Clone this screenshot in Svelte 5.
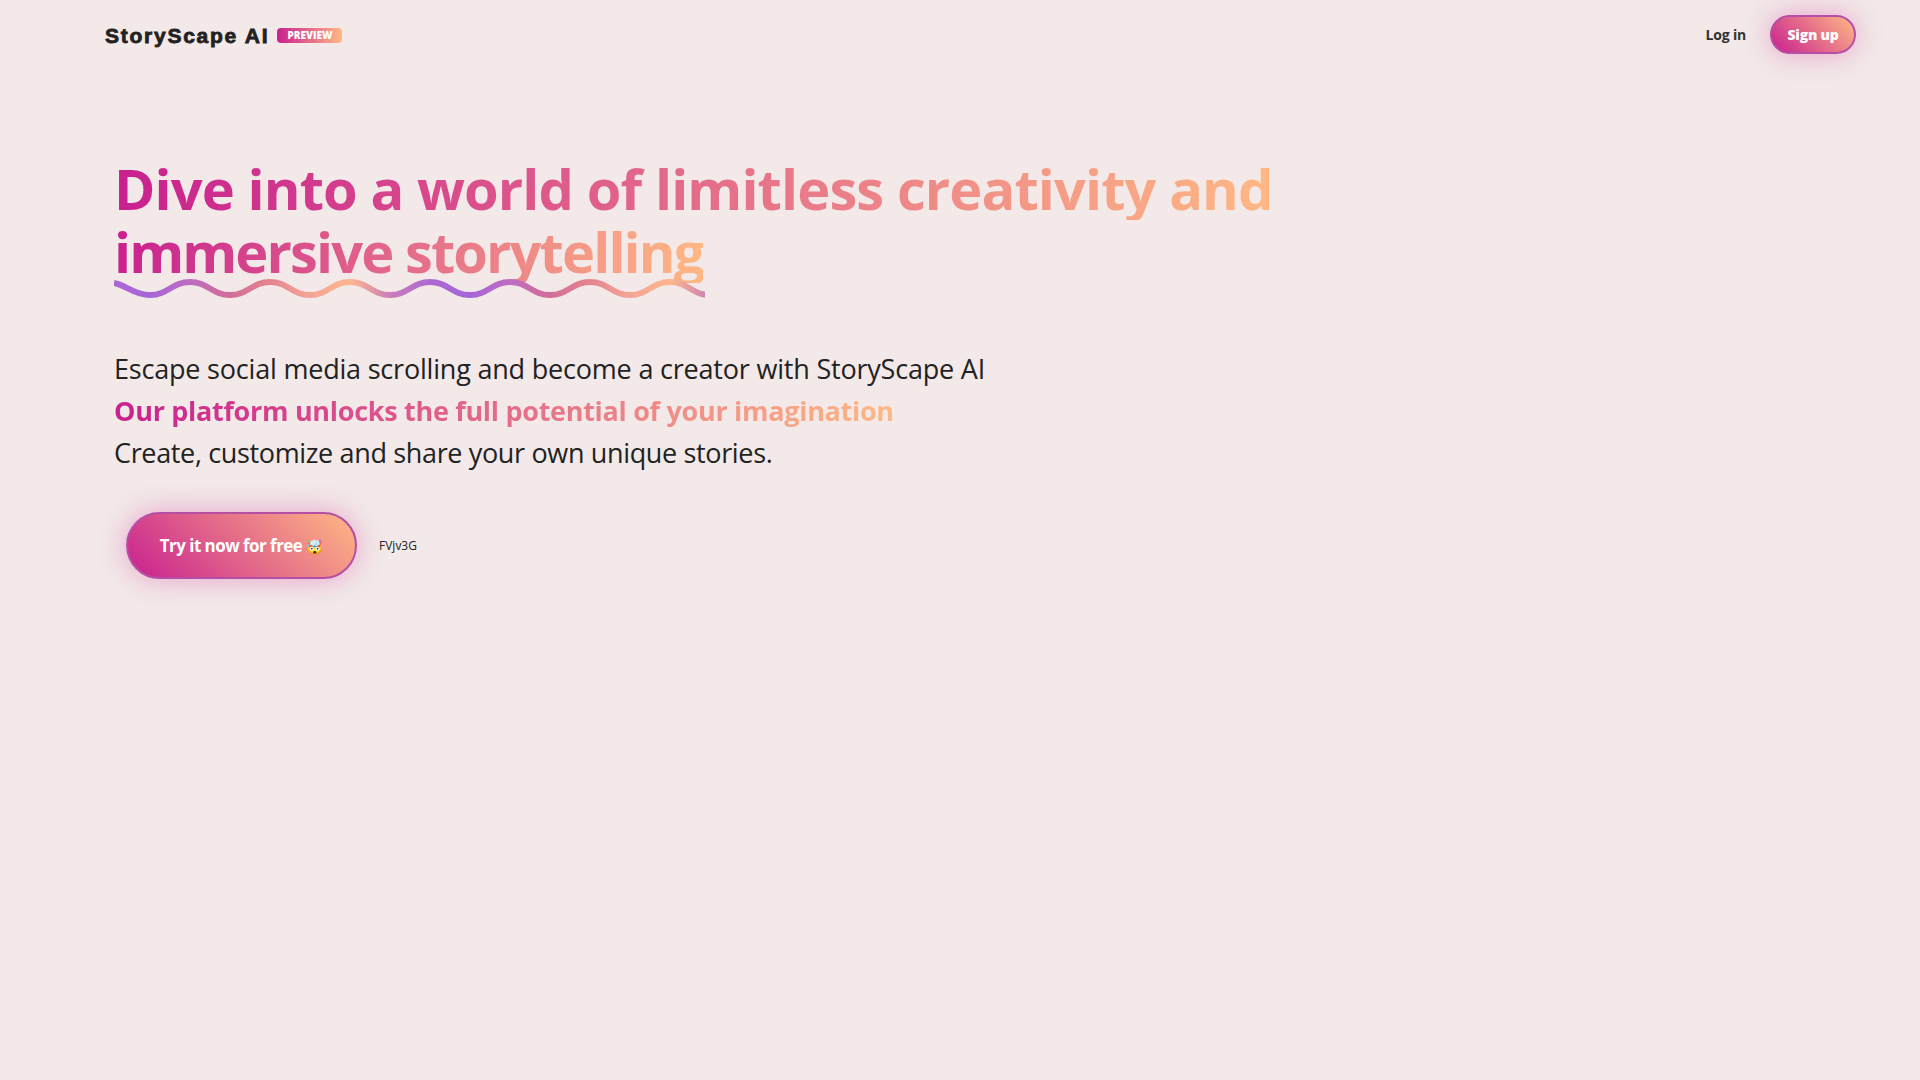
<script>
  const wave = (() => {
    const period = 80
    const top = 5
    const bottom = 18
    let d = `M0 6 C12 8 20 ${bottom} 36 ${bottom}`
    for (let x = 36; x < 590; x += period) {
      d += ` C${x + 18} ${bottom} ${x + 22} ${top} ${x + 40} ${top}`
      d += ` C${x + 58} ${top} ${x + 62} ${bottom} ${x + 80} ${bottom}`
    }
    return d
  })()
</script>

<div class="page">
  <nav class="navbar">
    <div class="brand">
      <span class="brand-name">StoryScape AI</span>
      <span class="preview">PREVIEW</span>
    </div>
    <div class="nav-links">
      <button class="login">Log in</button>
      <button class="btn signup">Sign up</button>
    </div>
  </nav>

  <section class="hero">
    <h1>
      <span class="grad">Dive into a world of limitless creativity and</span>
      <span class="grad second">immersive storytelling</span>
      <svg class="wave" width="591" height="24" viewBox="0 0 591 24" aria-hidden="true">
        <defs>
          <linearGradient id="wave-grad" gradientUnits="userSpaceOnUse" x1="0" y1="0" x2="320" y2="0" spreadMethod="repeat">
            <stop offset="0" stop-color="#a968d4" />
            <stop offset="0.11" stop-color="#a765d8" />
            <stop offset="0.24" stop-color="#be6cc0" />
            <stop offset="0.36" stop-color="#d46e98" />
            <stop offset="0.49" stop-color="#e58490" />
            <stop offset="0.61" stop-color="#f4a596" />
            <stop offset="0.74" stop-color="#fdb68e" />
            <stop offset="0.87" stop-color="#c87cbe" />
            <stop offset="1" stop-color="#a968d4" />
          </linearGradient>
        </defs>
        <path d={wave} fill="none" stroke="url(#wave-grad)" stroke-width="6" />
      </svg>
    </h1>

    <div class="copy">
      <p>Escape social media scrolling and become a creator with StoryScape AI</p>
      <p class="grad strong">Our platform unlocks the full potential of your imagination</p>
      <p class="last">Create, customize and share your own unique stories.</p>
    </div>

    <div class="cta-row">
      <button class="btn cta">Try it now for free <span class="emoji">🤯</span></button>
      <span class="code">FVjv3G</span>
    </div>
  </section>
</div>

<style>
  :global(body) {
    margin: 0;
    background: #f2e9e8;
    font-family: "Open Sans", "Noto Sans", sans-serif;
    color: #222;
  }
  .page {
    min-height: 1080px;
    box-sizing: border-box;
  }
  .navbar {
    display: flex;
    justify-content: space-between;
    align-items: center;
    padding: 15px 64px 0 105px;
  }
  .brand {
    display: flex;
    align-items: center;
    gap: 8px;
    padding-top: 2px;
  }
  .brand-name {
    font-family: "Liberation Sans", sans-serif;
    font-weight: 700;
    font-size: 21px;
    letter-spacing: 1.75px;
    -webkit-text-stroke: 0.8px #222;
    color: #222;
  }
  .preview {
    width: 65px;
    height: 15px;
    line-height: 15px;
    text-align: center;
    border-radius: 4px;
    background: linear-gradient(90deg, #c9208f, #ffb884);
    color: #fff;
    font-size: 10px;
    font-weight: 800;
  }
  .nav-links {
    display: flex;
    align-items: center;
    gap: 24px;
  }
  button {
    font-family: inherit;
    border: none;
    background: none;
    cursor: pointer;
  }
  .login {
    font-size: 14px;
    font-weight: 700;
    letter-spacing: -0.2px;
    color: #333;
    padding: 0;
  }
  .btn {
    color: #fff;
    font-weight: 700;
    border: 2px solid #b44fa5;
    border-radius: 999px;
    background: linear-gradient(45deg, #c9208f, #ffb884);
    box-shadow: 0 0 28px rgba(220, 50, 160, 0.4);
  }
  .signup {
    width: 86px;
    height: 39px;
    font-size: 14px;
    font-weight: 800;
    letter-spacing: -0.2px;
    padding: 0;
  }
  .hero {
    padding: 103px 0 0 114px;
  }
  h1 {
    position: relative;
    margin: 0;
    font-size: 56px;
    line-height: 63px;
    font-weight: 700;
    letter-spacing: -0.9px;
  }
  .grad {
    display: block;
    width: fit-content;
    background: linear-gradient(90deg, #c9208f, #ffb884);
    -webkit-background-clip: text;
    background-clip: text;
    color: transparent;
  }
  .second {
    letter-spacing: -1.9px;
  }
  .wave {
    position: absolute;
    left: 0;
    top: 120px;
  }
  .copy {
    margin-top: 65px;
    font-size: 27px;
    line-height: 42px;
    letter-spacing: -0.2px;
    color: #222;
  }
  .copy p {
    margin: 0;
  }
  .strong {
    font-weight: 700;
    letter-spacing: -0.3px;
  }
  .copy .last {
    letter-spacing: -0.35px;
  }
  .cta-row {
    display: flex;
    align-items: center;
    gap: 22px;
    margin: 38px 0 0 12px;
  }
  .cta {
    width: 231px;
    height: 67px;
    font-size: 17px;
    letter-spacing: -0.55px;
    padding: 0;
  }
  .emoji {
    font-size: 14px;
    letter-spacing: 0;
  }
  .code {
    font-size: 12px;
    color: #222;
  }
</style>
